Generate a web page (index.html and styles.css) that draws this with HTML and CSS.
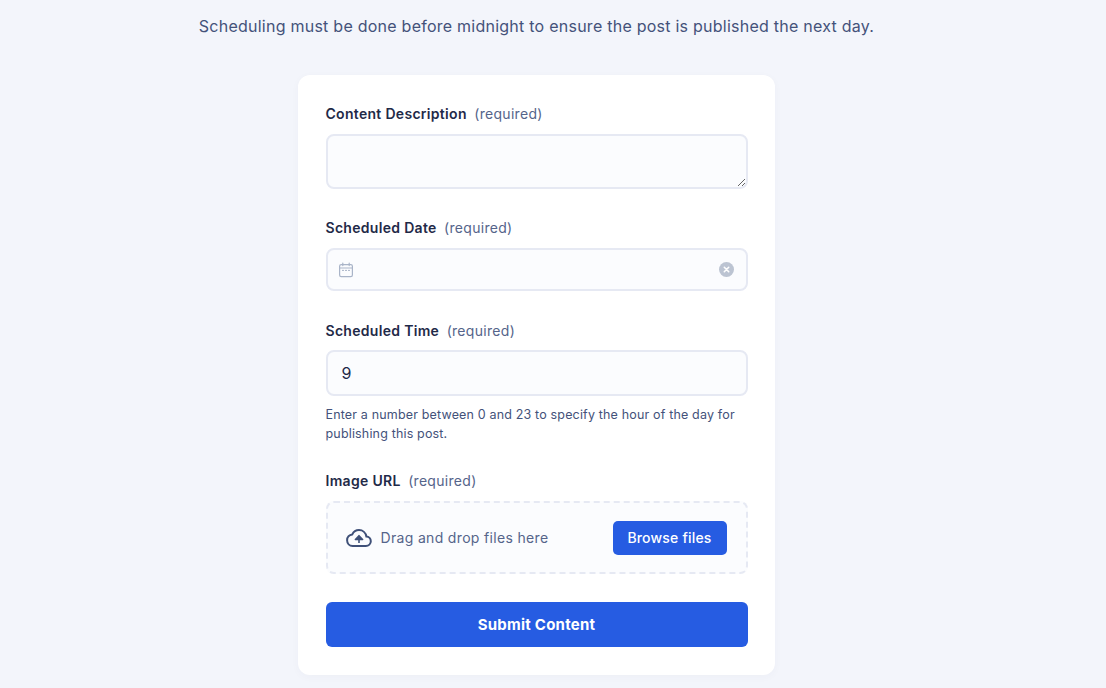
FILE: index.html
```html
<!DOCTYPE html>
<html lang="en">
<head>
<meta charset="utf-8">
<title>Schedule Content</title>
<link rel="stylesheet" href="styles.css">
</head>
<body>
<main class="page">
<p class="intro">Scheduling must be done before midnight to ensure the post is published the next day.</p>
<form class="card">
  <div class="field field-desc">
    <label class="label"><strong>Content Description</strong><span class="req">(required)</span></label>
    <textarea class="control textarea"></textarea>
  </div>
  <div class="field field-date">
    <label class="label"><strong>Scheduled Date</strong><span class="req">(required)</span></label>
    <div class="control date">
      <svg class="cal" viewBox="0 0 16 16" width="16" height="16" fill="none" stroke="#a9b4c8" stroke-width="1.2" stroke-linecap="round"><rect x="1.6" y="2.6" width="12.8" height="12" rx="1.6"/><path d="M1.6 6h12.8M4.8 1v2.6M11.2 1v2.6"/><path d="M4.4 8.4h1.2M7.4 8.4h1.2M10.4 8.4h1.2" stroke-width="1"/></svg>
      <svg class="clear" viewBox="0 0 15 15" width="15" height="15"><circle cx="7.5" cy="7.5" r="7.5" fill="#bcc4d2"/><path d="M5.3 5.3l4.4 4.4M9.7 5.3l-4.4 4.4" stroke="#fff" stroke-width="1.6" stroke-linecap="round"/></svg>
    </div>
  </div>
  <div class="field field-time">
    <label class="label label-tight"><strong>Scheduled Time</strong><span class="req">(required)</span></label>
    <div class="control time">9</div>
    <p class="help">Enter a number between 0 and 23 to specify the hour of the day for publishing this post.</p>
  </div>
  <div class="field field-image">
    <label class="label"><strong>Image URL</strong><span class="req">(required)</span></label>
    <div class="drop">
      <svg class="cloud" viewBox="0 0 26 18" width="26" height="18" fill="none"><path d="M6.6 16.9h13.2c2.9 0 5-2.1 5-4.7 0-2.5-1.9-4.5-4.4-4.7C19.8 3.800 16.800 1.100 13 1.100c-3 0-5.500 1.700-6.700 4.300C3.300 5.700 1.100 8.200 1.100 11.200c0 3.200 2.400 5.700 5.500 5.700z" stroke="#3f5078" stroke-width="2"/><path d="M13 14V8.500M13 6.700l-3.600 3.800h7.200z" stroke="#3f5078" stroke-width="1.600" fill="#3f5078" stroke-linejoin="round"/></svg>
      <span class="drop-text">Drag and drop files here</span>
      <button type="button" class="browse">Browse files</button>
    </div>
  </div>
  <button type="button" class="submit">Submit Content</button>
</form>
</main>
</body>
</html>
```
FILE: styles.css
```css
* { box-sizing: border-box; }
html, body { margin: 0; padding: 0; }
body {
  width: 1106px;
  height: 688px;
  overflow: hidden;
  background: #f3f5fb;
  font-family: Inter, "Liberation Sans", sans-serif;
  color: #1f2a48;
}
.page {
  width: 1073px;
  display: flex;
  flex-direction: column;
  align-items: center;
}
.intro {
  margin: 0;
  padding-top: 14px;
  height: 75px;
  white-space: nowrap;
  font-size: 16px;
  line-height: 24px;
  letter-spacing: 0.245px;
  color: #44527a;
}
.card {
  width: 477px;
  height: 600px;
  padding: 28px 27.500px;
  background: #fff;
  border-radius: 12px;
  box-shadow: 0 2px 8px rgba(60, 70, 110, 0.03);
}
.field { display: flex; flex-direction: column; }
.field-desc { height: 114px; }
.field-date { height: 103px; }
.field-time { height: 150px; }
.field-image { height: 132px; }
.label {
  display: flex;
  gap: 7.500px;
  height: 22px;
  line-height: 22px;
  font-size: 14px;
  letter-spacing: 0.3px;
  margin-bottom: 9px;
}
.label-tight { margin-bottom: 8px; }
.label strong { font-weight: 600; color: #1f2a48; }
.req { color: #55648a; }
.control {
  display: block;
  width: 100%;
  margin: 0;
  background: #fbfcfe;
  border: 2px solid #e6e9f3;
  border-radius: 8px;
}
.textarea { height: 55px; resize: vertical; outline: none; }
.date {
  height: 43px;
  display: flex;
  align-items: center;
  justify-content: space-between;
  padding: 0 11.500px 0 10.500px;
}
.time {
  height: 46px;
  padding: 0 14px;
  font-size: 16px;
  line-height: 42px;
  color: #1f2a48;
}
.help {
  margin: 9px 0 0;
  font-size: 12.500px;
  line-height: 19px;
  letter-spacing: 0.165px;
  color: #44527a;
}
.drop {
  height: 73px;
  display: flex;
  align-items: center;
  padding: 0 19px 0 18px;
  background: #fbfcfe;
  border: 2px dashed #e6e9f3;
  border-radius: 8px;
}
.drop-text {
  margin-left: 9px;
  flex: 1;
  font-size: 14px;
  letter-spacing: 0.33px;
  color: #55648a;
}
.browse {
  width: 114px;
  height: 34px;
  padding: 0;
  border: 0;
  border-radius: 5px;
  background: #265ce2;
  color: #fff;
  font: 500 14px Inter, "Liberation Sans", sans-serif;
  letter-spacing: 0.2px;
}
.submit {
  display: block;
  width: 100%;
  height: 45px;
  padding: 0;
  border: 0;
  border-radius: 6px;
  background: #265ce2;
  color: #fff;
  font: 700 15px Inter, "Liberation Sans", sans-serif;
  letter-spacing: 0.25px;
}
```
